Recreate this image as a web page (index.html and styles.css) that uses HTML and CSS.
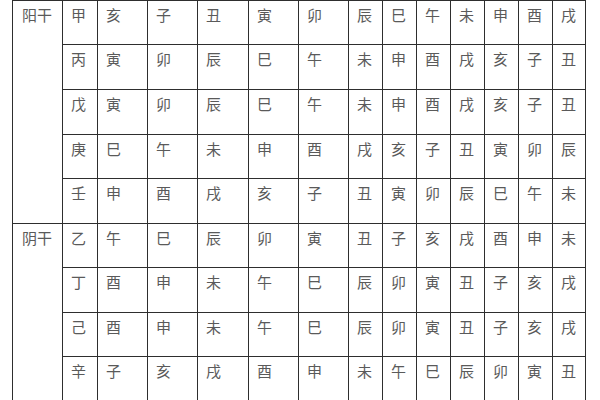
FILE: index.html
```html
<!DOCTYPE html>
<html lang="zh">
<head>
<meta charset="utf-8">
<link rel="stylesheet" href="styles.css">
</head>
<body>
<div class="table">
  <div class="cell label yang">阳干</div>
  <div class="cell">甲</div><div class="cell">亥</div><div class="cell">子</div><div class="cell">丑</div><div class="cell">寅</div><div class="cell">卯</div><div class="cell">辰</div><div class="cell">巳</div><div class="cell">午</div><div class="cell">未</div><div class="cell">申</div><div class="cell">酉</div><div class="cell">戌</div>
  <div class="cell">丙</div><div class="cell">寅</div><div class="cell">卯</div><div class="cell">辰</div><div class="cell">巳</div><div class="cell">午</div><div class="cell">未</div><div class="cell">申</div><div class="cell">酉</div><div class="cell">戌</div><div class="cell">亥</div><div class="cell">子</div><div class="cell">丑</div>
  <div class="cell">戊</div><div class="cell">寅</div><div class="cell">卯</div><div class="cell">辰</div><div class="cell">巳</div><div class="cell">午</div><div class="cell">未</div><div class="cell">申</div><div class="cell">酉</div><div class="cell">戌</div><div class="cell">亥</div><div class="cell">子</div><div class="cell">丑</div>
  <div class="cell">庚</div><div class="cell">巳</div><div class="cell">午</div><div class="cell">未</div><div class="cell">申</div><div class="cell">酉</div><div class="cell">戌</div><div class="cell">亥</div><div class="cell">子</div><div class="cell">丑</div><div class="cell">寅</div><div class="cell">卯</div><div class="cell">辰</div>
  <div class="cell">壬</div><div class="cell">申</div><div class="cell">酉</div><div class="cell">戌</div><div class="cell">亥</div><div class="cell">子</div><div class="cell">丑</div><div class="cell">寅</div><div class="cell">卯</div><div class="cell">辰</div><div class="cell">巳</div><div class="cell">午</div><div class="cell">未</div>
  <div class="cell label yin">阴干</div>
  <div class="cell">乙</div><div class="cell">午</div><div class="cell">巳</div><div class="cell">辰</div><div class="cell">卯</div><div class="cell">寅</div><div class="cell">丑</div><div class="cell">子</div><div class="cell">亥</div><div class="cell">戌</div><div class="cell">酉</div><div class="cell">申</div><div class="cell">未</div>
  <div class="cell">丁</div><div class="cell">酉</div><div class="cell">申</div><div class="cell">未</div><div class="cell">午</div><div class="cell">巳</div><div class="cell">辰</div><div class="cell">卯</div><div class="cell">寅</div><div class="cell">丑</div><div class="cell">子</div><div class="cell">亥</div><div class="cell">戌</div>
  <div class="cell">己</div><div class="cell">酉</div><div class="cell">申</div><div class="cell">未</div><div class="cell">午</div><div class="cell">巳</div><div class="cell">辰</div><div class="cell">卯</div><div class="cell">寅</div><div class="cell">丑</div><div class="cell">子</div><div class="cell">亥</div><div class="cell">戌</div>
  <div class="cell">辛</div><div class="cell">子</div><div class="cell">亥</div><div class="cell">戌</div><div class="cell">酉</div><div class="cell">申</div><div class="cell">未</div><div class="cell">午</div><div class="cell">巳</div><div class="cell">辰</div><div class="cell">卯</div><div class="cell">寅</div><div class="cell">丑</div>
</div>
</body>
</html>
```
FILE: styles.css
```css
html, body {
  margin: 0;
  padding: 0;
  background: #ffffff;
}
body {
  overflow: hidden;
  height: 400px;
}
.table {
  display: inline-grid;
  margin-left: 12px;
  padding: 1px;
  gap: 1px;
  background: #2e2e2e;
  grid-template-columns: 49px 34px 49px 49px 50px 49px 49px 33px 33px 33px 33px 33px 33px 32px;
  grid-template-rows: 43px 44px 44px 43px 44px 43px 44px 43px 44px;
  font-family: "Noto Sans CJK SC", "Noto Sans", sans-serif;
  font-size: 15px;
  line-height: 18px;
  color: #5a5a5a;
}
.cell {
  background: #ffffff;
  padding: 5px 0 0 8px;
}
.label {
  grid-column: 1;
  padding-left: 9px;
}
.yang {
  grid-row: 1 / span 5;
}
.yin {
  grid-row: 6 / span 4;
}
```
